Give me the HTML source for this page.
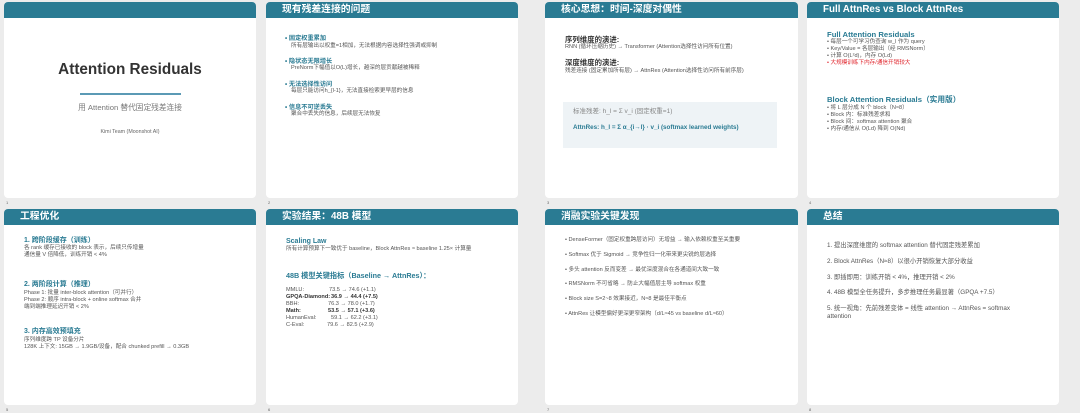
<!DOCTYPE html>
<html><head><meta charset="utf-8"><style>
*{margin:0;padding:0;box-sizing:border-box}
body{width:1080px;height:413px;background:#ececec;position:relative;overflow:hidden;font-family:"Liberation Sans","Noto Sans CJK SC",sans-serif;color:#444}
.s{position:absolute;background:#fff;border-radius:4px;overflow:hidden}
.h{position:absolute;left:0;top:0;right:0;height:16px;background:#2a7b93;color:#fff;font-weight:bold;font-size:9.8px;line-height:16px;padding-left:16px}
.t{position:absolute;white-space:nowrap;font-size:5.6px;line-height:7px;color:#555}
.hd{color:#2a7b93;font-weight:bold;font-size:6.2px}
.n{position:absolute;font-size:4px;color:#666}
</style></head><body>
<div class="s" style="left:4px;top:2px;width:252px;height:196px"><div class="h" style="height:16px"></div></div>
<div class="s" style="left:266px;top:2px;width:252px;height:196px"><div class="h">现有残差连接的问题</div></div>
<div class="s" style="left:545px;top:2px;width:253px;height:196px"><div class="h">核心思想：时间-深度对偶性</div></div>
<div class="s" style="left:807px;top:2px;width:252px;height:196px"><div class="h">Full AttnRes vs Block AttnRes</div></div>
<div class="s" style="left:4px;top:209px;width:252px;height:196px"><div class="h">工程优化</div></div>
<div class="s" style="left:266px;top:209px;width:252px;height:196px"><div class="h">实验结果：48B 模型</div></div>
<div class="s" style="left:545px;top:209px;width:253px;height:196px"><div class="h">消融实验关键发现</div></div>
<div class="s" style="left:807px;top:209px;width:252px;height:196px"><div class="h">总结</div></div>
<div class="n" style="left:6px;top:200px">1</div><div class="n" style="left:268px;top:200px">2</div><div class="n" style="left:547px;top:200px">3</div><div class="n" style="left:809px;top:200px">4</div>
<div class="n" style="left:6px;top:407px">5</div><div class="n" style="left:268px;top:407px">6</div><div class="n" style="left:547px;top:407px">7</div><div class="n" style="left:809px;top:407px">8</div>

<!-- slide1 -->
<div class="t" style="left:4px;width:252px;text-align:center;top:60px;font-size:15.3px;line-height:19px;font-weight:bold;color:#333">Attention Residuals</div>
<div style="position:absolute;left:80px;top:93px;width:101px;height:1.5px;background:#5b9ab5"></div>
<div class="t" style="left:4px;width:252px;text-align:center;top:103px;font-size:7.7px;line-height:10px;color:#777">用 Attention 替代固定残差连接</div>
<div class="t" style="left:4px;width:252px;text-align:center;top:129px;font-size:5.3px;color:#666">Kimi Team (Moonshot AI)</div>

<!-- slide2 -->
<div class="t hd" style="left:285px;top:35px">• 固定权重累加</div>
<div class="t" style="left:291px;top:42.5px">所有层输出以权重=1相加，无法根据内容选择性强调或抑制</div>
<div class="t hd" style="left:285px;top:57.5px">• 隐状态无限增长</div>
<div class="t" style="left:291px;top:65px">PreNorm下幅值以O(L)增长，越深的层贡献越被稀释</div>
<div class="t hd" style="left:285px;top:80.5px">• 无法选择性访问</div>
<div class="t" style="left:291px;top:87.5px">每层只能访问h_{l-1}，无法直接检索更早层的信息</div>
<div class="t hd" style="left:285px;top:103.5px">• 信息不可逆丢失</div>
<div class="t" style="left:291px;top:110.5px">聚合中丢失的信息，后续层无法恢复</div>

<!-- slide3 -->
<div class="t" style="left:565px;top:34.5px;font-size:7.4px;line-height:9px;font-weight:bold;color:#333">序列维度的演进:</div>
<div class="t" style="left:565px;top:43.5px">RNN (循环压缩历史) → Transformer (Attention选择性访问所有位置)</div>
<div class="t" style="left:565px;top:57.5px;font-size:7.4px;line-height:9px;font-weight:bold;color:#333">深度维度的演进:</div>
<div class="t" style="left:565px;top:67.5px">残差连接 (固定累加所有层) → AttnRes (Attention选择性访问所有前序层)</div>
<div style="position:absolute;left:563px;top:102px;width:214px;height:46px;background:#eef3f6"></div>
<div class="t" style="left:573px;top:108px;color:#888;font-size:6.5px;line-height:8px">标准残差:  h_l = Σ v_i    (固定权重=1)</div>
<div class="t" style="left:573px;top:124px;color:#2a7b93;font-weight:bold;font-size:6.3px;line-height:8px">AttnRes:     h_l = Σ α_{i→l} · v_i     (softmax learned weights)</div>

<!-- slide4 -->
<div class="t hd" style="left:827px;top:29.5px;font-size:7.7px;line-height:9px">Full Attention Residuals</div>
<div class="t" style="left:827px;top:38.5px">• 每层一个可学习伪查询 w_l 作为 query</div>
<div class="t" style="left:827px;top:45.5px">• Key/Value = 各层输出（经 RMSNorm）</div>
<div class="t" style="left:827px;top:52.5px">• 计算 O(L²d)，内存 O(Ld)</div>
<div class="t" style="left:827px;top:59.5px;color:#e0242c">• 大规模训练下内存/通信开销较大</div>
<div class="t hd" style="left:827px;top:94.5px;font-size:7.7px;line-height:9px">Block Attention Residuals（实用版）</div>
<div class="t" style="left:827px;top:104.5px">• 将 L 层分成 N 个 block（N≈8）</div>
<div class="t" style="left:827px;top:111.5px">• Block 内：标准残差求和</div>
<div class="t" style="left:827px;top:118.5px">• Block 间：softmax attention 聚合</div>
<div class="t" style="left:827px;top:125.5px">• 内存/通信从 O(Ld) 降到 O(Nd)</div>

<!-- slide5 -->
<div class="t hd" style="left:24px;top:236.5px;font-size:7px;line-height:8px">1. 跨阶段缓存（训练）</div>
<div class="t" style="left:24px;top:244.5px">各 rank 缓存已接收的 block 表示，后续只传增量</div>
<div class="t" style="left:24px;top:251.5px">通信量 V 倍降低，训练开销 &lt; 4%</div>
<div class="t hd" style="left:24px;top:280.5px;font-size:7px;line-height:8px">2. 两阶段计算（推理）</div>
<div class="t" style="left:24px;top:289.5px">Phase 1: 批量 inter-block attention（可并行）</div>
<div class="t" style="left:24px;top:296.5px">Phase 2: 顺序 intra-block + online softmax 合并</div>
<div class="t" style="left:24px;top:303.5px">端到端推理延迟开销 &lt; 2%</div>
<div class="t hd" style="left:24px;top:327.5px;font-size:7px;line-height:8px">3. 内存高效预填充</div>
<div class="t" style="left:24px;top:336.5px">序列维度跨 TP 设备分片</div>
<div class="t" style="left:24px;top:343.5px">128K 上下文: 15GB → 1.9GB/设备，配合 chunked prefill → 0.3GB</div>

<!-- slide6 -->
<div class="t hd" style="left:286px;top:236.5px;font-size:7px;line-height:9px">Scaling Law</div>
<div class="t" style="left:286px;top:245.5px">所有计算预算下一致优于 baseline，Block AttnRes ≈ baseline 1.25× 计算量</div>
<div class="t hd" style="left:286px;top:270.5px;font-size:7.2px;line-height:9px">48B 模型关键指标（Baseline → AttnRes）：</div>
<div class="t" style="left:286px;top:286.5px">MMLU:</div><div class="t" style="left:329px;top:286.5px">73.5 → 74.6 (+1.1)</div>
<div class="t" style="left:286px;top:293.5px;font-weight:bold;color:#333">GPQA-Diamond:</div><div class="t" style="left:331px;top:293.5px;font-weight:bold;color:#333">36.9 → 44.4 (+7.5)</div>
<div class="t" style="left:286px;top:300.5px">BBH:</div><div class="t" style="left:328px;top:300.5px">76.3 → 78.0 (+1.7)</div>
<div class="t" style="left:286px;top:307.5px;font-weight:bold;color:#333">Math:</div><div class="t" style="left:328px;top:307.5px;font-weight:bold;color:#333">53.5 → 57.1 (+3.6)</div>
<div class="t" style="left:286px;top:314.5px">HumanEval:</div><div class="t" style="left:331px;top:314.5px">59.1 → 62.2 (+3.1)</div>
<div class="t" style="left:286px;top:321.5px">C-Eval:</div><div class="t" style="left:327px;top:321.5px">79.6 → 82.5 (+2.9)</div>

<!-- slide7 -->
<div class="t" style="left:565px;top:236.5px">• DenseFormer（固定权重跨层访问）无增益 → 输入依赖权重至关重要</div>
<div class="t" style="left:565px;top:251.5px">• Softmax 优于 Sigmoid → 竞争性归一化带来更尖锐的层选择</div>
<div class="t" style="left:565px;top:266.5px">• 多头 attention 反而变差 → 最优深度混合在各通道间大致一致</div>
<div class="t" style="left:565px;top:280.5px">• RMSNorm 不可省略 → 防止大幅值层主导 softmax 权重</div>
<div class="t" style="left:565px;top:295.5px">• Block size S=2~8 效果接近，N≈8 是最佳平衡点</div>
<div class="t" style="left:565px;top:310.5px">• AttnRes 让模型偏好更深更窄架构（d/L≈45 vs baseline d/L≈60）</div>

<!-- slide8 -->
<div class="t" style="left:827px;top:242px;font-size:6.3px;line-height:8px">1.  提出深度维度的 softmax attention 替代固定残差累加</div>
<div class="t" style="left:827px;top:258px;font-size:6.3px;line-height:8px">2.  Block AttnRes（N≈8）以很小开销恢复大部分收益</div>
<div class="t" style="left:827px;top:274px;font-size:6.3px;line-height:8px">3.  即插即用：训练开销 &lt; 4%，推理开销 &lt; 2%</div>
<div class="t" style="left:827px;top:289px;font-size:6.3px;line-height:8px">4.  48B 模型全任务提升，多步推理任务最显著（GPQA +7.5）</div>
<div class="t" style="left:827px;top:305px;font-size:6.3px;line-height:8px">5.  统一视角：先前残差变体 = 线性 attention → AttnRes = softmax</div>
<div class="t" style="left:827px;top:313px;font-size:6.3px;line-height:8px">attention</div>
</body></html>
